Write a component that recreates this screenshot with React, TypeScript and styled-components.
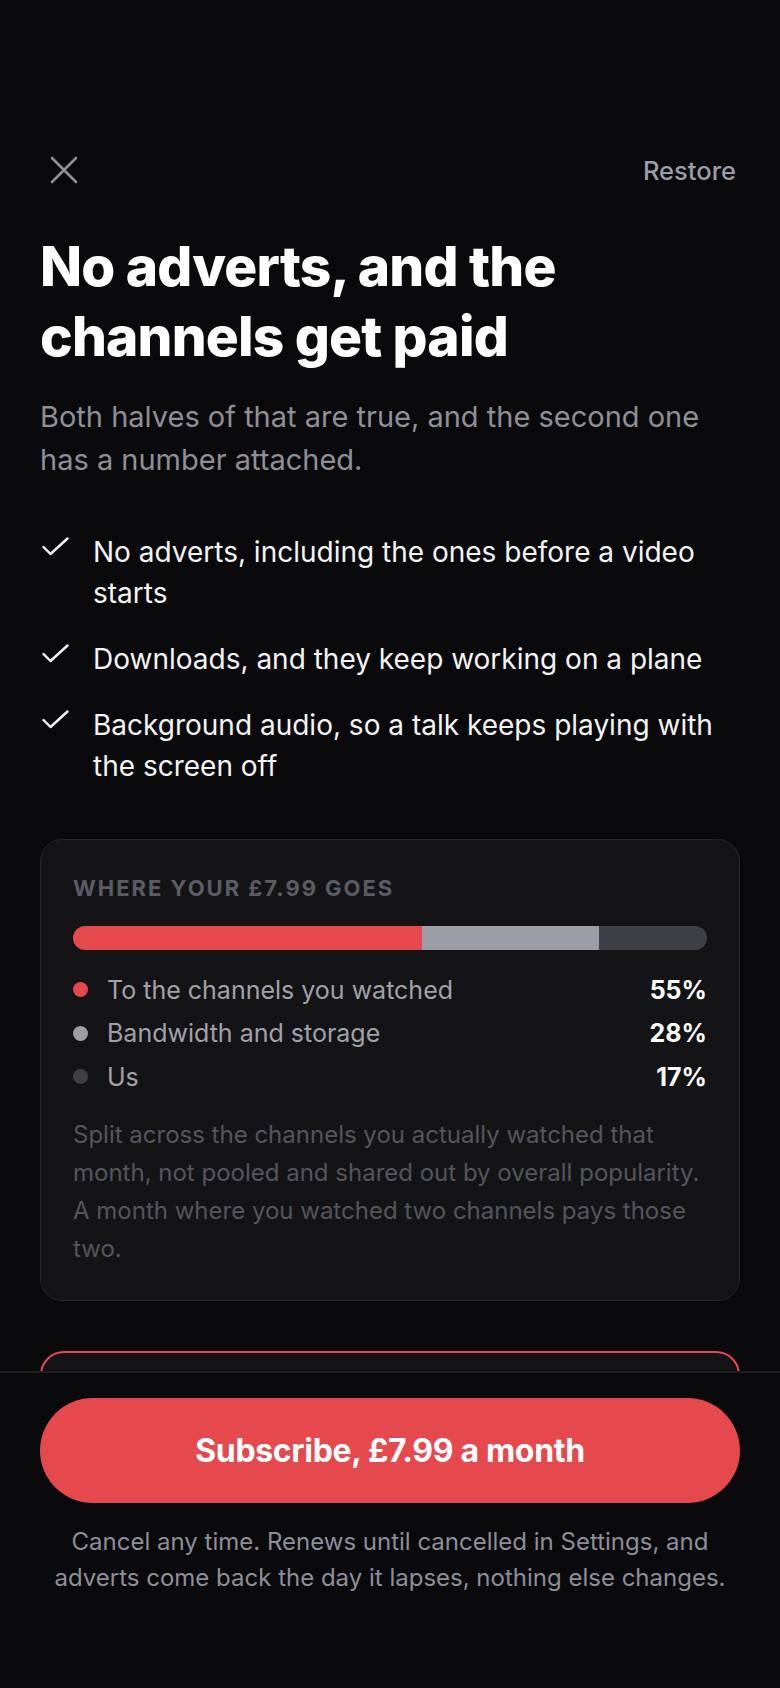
import React from 'react';
import styled, { createGlobalStyle } from 'styled-components';

const GlobalStyle = createGlobalStyle`
  html, body {
    margin: 0;
    padding: 0;
    background: #0a0a0c;
  }
  body {
    font-family: Inter, "Noto Sans", "Liberation Sans", sans-serif;
    color: #fafafa;
    -webkit-font-smoothing: antialiased;
  }
  * {
    box-sizing: border-box;
  }
`;

const perks = [
  'No adverts, including the ones before a video starts',
  'Downloads, and they keep working on a plane',
  'Background audio, so a talk keeps playing with the screen off',
];

const split = [
  { label: 'To the channels you watched', value: 55, color: '#e5484d' },
  { label: 'Bandwidth and storage', value: 28, color: '#9d9da6' },
  { label: 'Us', value: 17, color: '#3f3f46' },
];

const CloseIcon = () => (
  <svg width="28" height="28" viewBox="0 0 28 28" fill="none">
    <path
      d="M2 2L26 26M26 2L2 26"
      stroke="currentColor"
      strokeWidth="2.6"
      strokeLinecap="round"
    />
  </svg>
);

const CheckIcon = () => (
  <svg width="27" height="19" viewBox="0 0 27 19" fill="none">
    <path
      d="M1.5 10L8.5 17L25.5 1.5"
      stroke="currentColor"
      strokeWidth="2.4"
      strokeLinecap="round"
      strokeLinejoin="round"
    />
  </svg>
);

const App: React.FC = () => {
  return (
    <>
      <GlobalStyle />
      <Screen>
        <Scroll>
          <TopBar>
            <CloseButton aria-label="Close">
              <CloseIcon />
            </CloseButton>
            <RestoreButton>Restore</RestoreButton>
          </TopBar>

          <Title>No adverts, and the channels get paid</Title>
          <Lead>
            Both halves of that are true, and the second one has a number
            attached.
          </Lead>

          <PerkList>
            {perks.map((perk) => (
              <Perk key={perk}>
                <PerkCheck>
                  <CheckIcon />
                </PerkCheck>
                <span>{perk}</span>
              </Perk>
            ))}
          </PerkList>

          <Card>
            <CardLabel>Where your £7.99 goes</CardLabel>
            <Bar>
              {split.map((s) => (
                <BarSegment
                  key={s.label}
                  $color={s.color}
                  style={{ width: `${s.value}%` }}
                />
              ))}
            </Bar>
            <Legend>
              {split.map((s) => (
                <LegendRow key={s.label}>
                  <Dot $color={s.color} />
                  <LegendLabel>{s.label}</LegendLabel>
                  <LegendValue>{s.value}%</LegendValue>
                </LegendRow>
              ))}
            </Legend>
            <Footnote>
              Split across the channels you actually watched that month, not
              pooled and shared out by overall popularity. A month where you
              watched two channels pays those two.
            </Footnote>
          </Card>

          {/* selected plan card, scrolled under the footer */}
          <PlanCard aria-label="Monthly plan, £7.99 a month" />
        </Scroll>

        <Footer>
          <SubscribeButton>Subscribe, £7.99 a month</SubscribeButton>
          <Terms>
            Cancel any time. Renews until cancelled in Settings, and adverts
            come back the day it lapses, nothing else changes.
          </Terms>
        </Footer>
      </Screen>
    </>
  );
};

const Screen = styled.div`
  display: flex;
  flex-direction: column;
  height: 100vh;
  background: #0a0a0c;
`;

const Scroll = styled.div`
  flex: 1;
  overflow: hidden;
  padding: 146px 40px 40px;
`;

const TopBar = styled.div`
  display: flex;
  align-items: center;
  justify-content: space-between;
  height: 48px;
`;

const CloseButton = styled.button`
  display: flex;
  align-items: center;
  justify-content: center;
  width: 48px;
  height: 48px;
  padding: 0;
  background: none;
  border: none;
  color: #8e8e96;
  cursor: pointer;
`;

const RestoreButton = styled.button`
  background: none;
  border: none;
  padding: 0 4px 0 0;
  font-family: inherit;
  font-size: 25.5px;
  font-weight: 500;
  color: #9b9da8;
  cursor: pointer;
`;

const Title = styled.h1`
  margin: 37px 0 0;
  font-size: 55px;
  line-height: 70px;
  font-weight: 800;
  letter-spacing: -0.015em;
  color: #ffffff;
`;

const Lead = styled.p`
  margin: 24px 0 0;
  font-size: 29px;
  line-height: 43px;
  color: #8f8f98;
`;

const PerkList = styled.ul`
  list-style: none;
  margin: 51px 0 0;
  padding: 0;
  display: flex;
  flex-direction: column;
  gap: 25px;
`;

const Perk = styled.li`
  display: flex;
  align-items: flex-start;
  gap: 24px;
  font-size: 28px;
  line-height: 41px;
  color: #f4f4f5;
`;

const PerkCheck = styled.span`
  flex: none;
  display: flex;
  margin: 5px 0 0 2px;
  color: #f4f4f5;
`;

const Card = styled.section`
  margin-top: 52px;
  padding: 35px 32px 32px;
  background: #141417;
  border: 1px solid #25252a;
  border-radius: 22px;
`;

const CardLabel = styled.div`
  font-size: 22px;
  line-height: 26px;
  font-weight: 700;
  letter-spacing: 0.09em;
  text-transform: uppercase;
  color: #5c5c64;
`;

const Bar = styled.div`
  display: flex;
  height: 24px;
  margin-top: 25px;
  border-radius: 12px;
  overflow: hidden;
`;

const BarSegment = styled.div<{ $color: string }>`
  height: 100%;
  background: ${({ $color }) => $color};
`;

const Legend = styled.div`
  margin-top: 18px;
  display: flex;
  flex-direction: column;
`;

const LegendRow = styled.div`
  display: flex;
  align-items: center;
  height: 43.5px;
  font-size: 25px;
`;

const Dot = styled.span<{ $color: string }>`
  flex: none;
  width: 15px;
  height: 15px;
  border-radius: 50%;
  background: ${({ $color }) => $color};
  margin-right: 19px;
`;

const LegendLabel = styled.span`
  flex: 1;
  color: #a1a1aa;
`;

const LegendValue = styled.span`
  font-weight: 700;
  color: #ffffff;
`;

const Footnote = styled.p`
  margin: 17px 0 0;
  font-size: 24px;
  line-height: 38px;
  color: #55555d;
`;

const PlanCard = styled.div`
  margin-top: 50px;
  height: 160px;
  background: #141417;
  border: 2px solid #e5484d;
  border-radius: 24px;
`;

const Footer = styled.footer`
  flex: none;
  display: flex;
  flex-direction: column;
  align-items: stretch;
  gap: 21px;
  padding: 25px 40px 92px;
  border-top: 2px solid #1f1f23;
  background: #0a0a0c;
`;

const SubscribeButton = styled.button`
  height: 105px;
  border: none;
  border-radius: 53px;
  background: #e5484d;
  font-family: inherit;
  font-size: 32px;
  font-weight: 700;
  letter-spacing: -0.01em;
  color: #ffffff;
  cursor: pointer;
`;

const Terms = styled.p`
  margin: 0;
  text-align: center;
  font-size: 24px;
  line-height: 36px;
  color: #8e8e99;
`;

export default App;
